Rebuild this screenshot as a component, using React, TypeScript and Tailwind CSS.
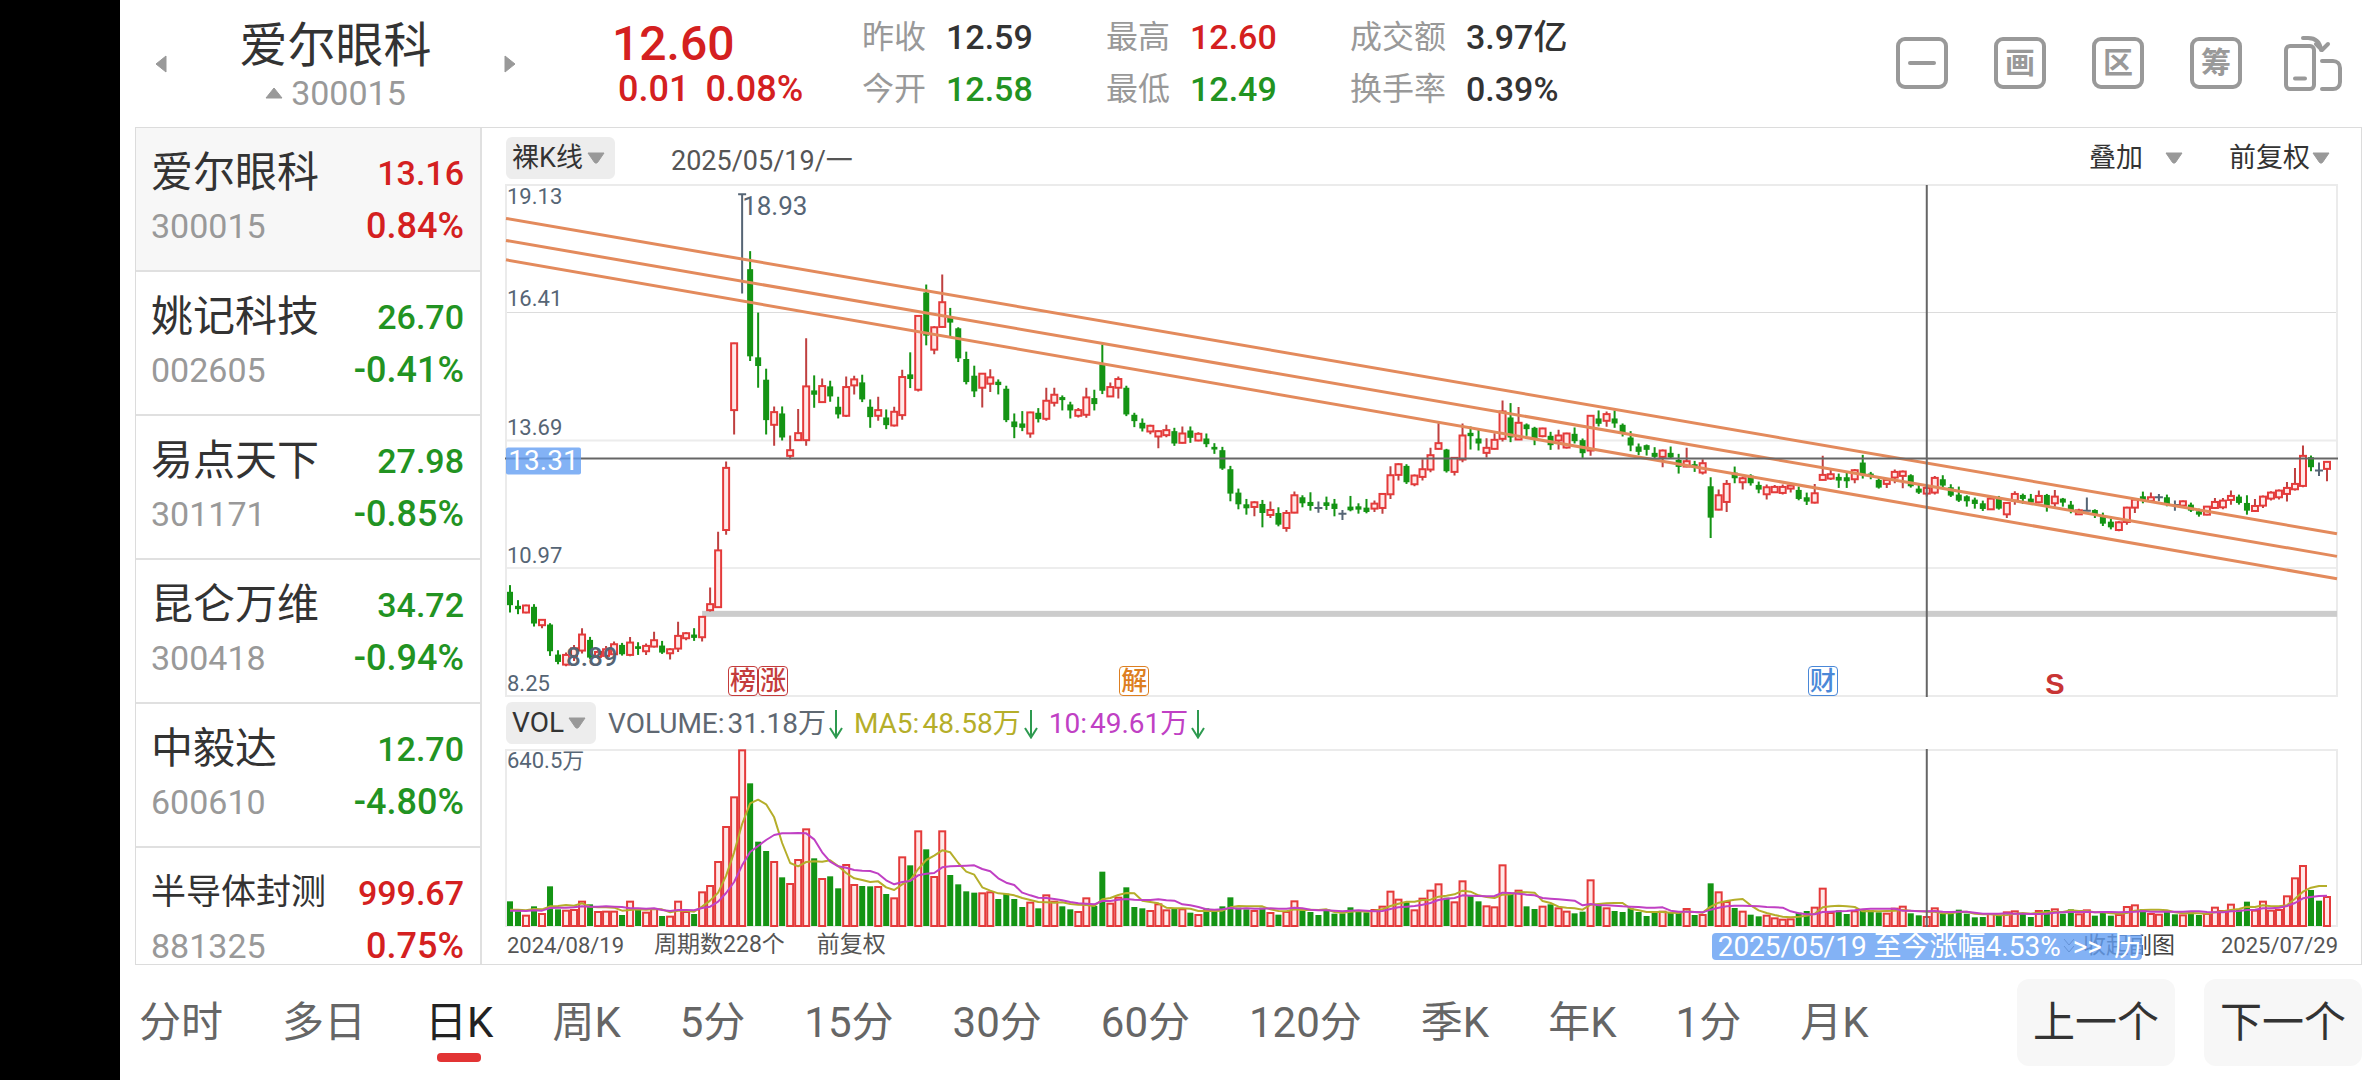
import React from "react";

/*
 * Daily bars: direction, then high, body top, body bottom and low.
 * Heights are in chart units, three to a pixel, growing downwards.
 */
const CANDLES = `
g 1213 1233 1273 1295|g 1258 1275 1285 1300|r 1272 1274 1295 1297|g 1270 1278 1328 1337|r 1315 1317 1333 1342|g 1327 1331 1411 1425
g 1408 1421 1443 1450|r 1415 1422 1451 1456|r 1392 1402 1425 1440|r 1342 1361 1409 1418|g 1368 1377 1430 1434|r 1405 1413 1428 1434
r 1395 1405 1425 1428|r 1382 1390 1420 1424|g 1386 1392 1420 1424|r 1368 1385 1422 1426|g 1384 1396 1404 1422|r 1388 1395 1411 1422
r 1353 1378 1397 1400|g 1380 1394 1415 1419|r 1402 1405 1417 1436|r 1323 1365 1403 1413|r 1354 1357 1372 1378|g 1342 1361 1371 1380
r 1306 1308 1369 1382|r 1220 1270 1288 1292|r 1053 1109 1279 1281|r 843 862 1048 1062|r 487 489 689 762|n 43 43 43 340
g 213 267 528 542|g 397 531 557 622|g 565 598 719 762|r 678 695 733 796|g 678 699 771 780|r 765 809 826 836
r 686 758 779 780|r 474 618 779 796|g 585 630 643 682|r 594 617 665 667|g 601 618 648 664|g 649 679 702 714
r 588 620 706 710|r 586 597 615 642|g 583 606 657 665|g 657 679 710 742|r 649 689 706 721|g 687 711 734 746
r 679 694 735 738|r 568 590 704 718|g 516 582 596 623|r 405 407 628 633|g 313 337 466 495|r 438 441 508 522
r 283 366 440 442|g 383 410 427 468|g 441 444 534 545|g 514 536 605 612|g 556 586 633 650|r 578 580 622 681
r 567 591 610 635|g 597 604 614 642|g 616 625 719 725|g 699 723 740 773|g 692 729 742 752|r 694 696 759 772
g 683 697 716 726|r 622 661 715 721|r 622 643 667 678|g 645 650 659 690|g 664 672 690 714|r 683 689 706 711
r 622 651 703 712|g 628 653 671 690|g 493 552 631 641|r 606 620 648 650|r 588 596 622 654|g 616 622 702 707
g 697 703 722 740|g 714 727 744 753|r 733 736 753 761|r 750 752 768 803|r 733 749 764 770|g 742 752 789 796
r 738 759 787 789|g 738 750 772 787|r 755 760 780 782|g 759 774 791 800|g 788 799 807 820|g 799 809 864 868
g 856 866 939 962|g 924 936 971 986|g 955 971 983 1002|r 962 965 979 1007|g 958 970 997 1040|r 963 988 1003 1012
g 980 997 1032 1037|r 988 997 1042 1053|r 933 944 996 998|g 944 950 968 980|g 935 964 976 990|n 963 982 982 996
g 948 965 976 988|g 955 969 985 1007|n 988 999 999 1018|g 946 978 989 992|g 968 977 987 999|g 955 981 994 998
r 960 969 984 994|r 937 940 982 999|r 857 884 941 955|r 848 851 883 900|g 851 856 905 910|r 882 885 911 917
r 836 866 889 900|r 802 824 867 875|r 728 788 805 807|g 805 807 872 876|r 830 832 874 885|r 729 765 837 845
g 738 757 767 807|g 744 774 789 810|r 773 802 817 831|r 758 778 805 807|r 660 693 775 783|g 668 711 771 785
r 680 727 777 778|g 729 732 746 766|g 739 742 778 794|r 742 744 767 770|g 754 766 794 808|r 748 765 780 807
r 757 759 801 804|g 741 760 782 789|g 774 779 818 832|r 704 706 810 826|g 690 714 730 738|r 693 701 721 739
g 690 714 729 742|g 729 733 759 768|g 752 771 795 812|g 789 798 814 824|g 792 794 808 825|g 800 817 829 833
r 807 810 829 860|g 798 817 831 834|g 820 838 859 879|r 802 842 858 860|g 841 851 862 874|r 836 848 876 882
g 890 917 1011 1072|r 927 944 987 989|r 898 910 964 994|g 858 876 893 908|r 888 893 905 927|g 881 885 908 915
g 903 913 927 938|r 912 920 941 957|r 913 919 935 937|r 912 919 937 942|r 912 915 924 936|g 918 928 955 959
g 936 950 963 973|r 910 938 966 969|r 826 883 898 899|r 868 881 894 898|g 879 889 900 922|g 876 890 902 922
r 865 869 896 908|g 823 846 882 894|g 874 879 885 896|g 892 898 921 924|r 893 898 910 922|r 867 874 891 908
r 870 873 886 923|g 881 884 917 921|g 912 924 936 940|r 912 922 939 948|r 886 892 936 942|g 884 896 915 920
g 911 920 945 949|g 918 942 960 964|g 944 947 962 978|g 951 957 970 984|g 960 968 985 991|r 950 954 986 988
g 946 954 984 987|r 964 967 1001 1012|r 932 940 960 972|g 939 943 955 970|g 940 954 966 970|r 930 946 965 968
g 940 943 975 993|r 928 948 968 978|g 952 954 966 978|g 961 972 990 998|r 984 989 1001 1003|n 951 990 990 990
g 986 988 1000 1012|g 996 1008 1029 1036|g 1014 1023 1040 1046|r 1022 1025 1048 1052|r 978 981 1024 1032|r 952 957 981 997
g 933 947 960 968|r 936 950 961 964|n 940 950 950 962|g 942 950 973 977|n 960 973 973 990|r 960 962 975 977
g 966 972 990 994|g 984 992 1002 1008|r 976 978 1002 1004|r 952 964 982 985|r 952 960 980 986|r 930 946 958 972
g 942 948 967 972|g 944 967 990 1002|r 955 976 991 994|r 945 948 975 982|r 932 936 954 960|r 927 930 950 957
r 904 922 940 963|r 862 910 926 930|r 795 826 916 920|g 825 830 860 872|n 846 870 870 886|r 842 844 865 902
`
  .trim()
  .split(/[|\n]/)
  .map((row) => {
    const [dir, ...nums] = row.trim().split(" ");
    const [high, top, bottom, low] = nums.map(Number);
    return { dir, high, top, bottom, low };
  });

/* Top edge of every volume bar; the base line is at VOLUME_BASE. */
const VOLUME_TOPS = [
  631, 661, 672, 646, 667, 586, 655, 657, 655, 630, 640, 661, 660, 660, 672, 630, 655, 663, 652, 675,
  675, 630, 661, 669, 602, 583, 511, 406, 317, 176, 277, 452, 480, 511, 559, 577, 505, 413, 502, 562,
  556, 592, 520, 580, 585, 586, 586, 609, 620, 497, 523, 419, 475, 556, 419, 552, 580, 601, 605, 605,
  602, 624, 608, 624, 648, 633, 652, 611, 630, 646, 655, 661, 620, 645, 542, 636, 618, 589, 648, 652,
  658, 638, 656, 654, 653, 665, 670, 652, 660, 646, 619, 650, 655, 658, 650, 664, 671, 661, 629, 658,
  663, 672, 655, 668, 667, 649, 660, 664, 655, 645, 600, 624, 634, 656, 621, 597, 578, 620, 632, 569,
  612, 631, 644, 647, 521, 608, 597, 646, 654, 645, 640, 650, 660, 667, 662, 566, 640, 650, 660, 663,
  652, 663, 675, 664, 660, 664, 665, 652, 672, 670, 577, 602, 631, 651, 660, 671, 676, 672, 680, 684,
  683, 665, 660, 648, 591, 664, 658, 669, 659, 655, 657, 664, 666, 651, 645, 667, 673, 676, 650, 668,
  667, 656, 668, 679, 678, 667, 673, 662, 659, 668, 678, 658, 657, 653, 668, 655, 668, 656, 674, 665,
  674, 670, 646, 641, 655, 667, 669, 660, 670, 671, 660, 672, 667, 648, 658, 639, 656, 632, 657, 630,
  657, 655, 614, 560, 523, 597, 629, 616,
];

const VOLUME_BASE = 705;
const RISING_FLAT_DAYS = [29, 197, 206];
const RED = "#e43a3a";
const GREEN = "#149414";
const SLATE = "#566575";
const VIEW_W = 5496;
const PRICE_TOP = 12;
const PRICE_H = 1536;

const barX = (i: number) => 12 + 24 * i;
const leftOf = (i: number) => `${((barX(i) + 3) / VIEW_W) * 100}%`;
const topOf = (y: number) => `${((y - PRICE_TOP) / PRICE_H) * 100}%`;

function average(days: number) {
  return VOLUME_TOPS.map((_, i) => {
    let sum = 0;
    for (let k = i - days + 1; k <= i; k++) sum += k < 0 ? 662 : VOLUME_TOPS[k];
    return `${barX(i)},${Math.round(sum / days)}`;
  }).join(" ");
}

function Candle({ i }: { i: number }) {
  const c = CANDLES[i];
  const x = barX(i);
  if (c.dir === "n") {
    return <path d={`M${x} ${c.high}V${c.low}M${x - 12} ${c.top}h24`} stroke={SLATE} strokeWidth="6" />;
  }
  if (c.dir === "g") {
    return (
      <g fill={GREEN}>
        <rect x={x - 3} y={c.high} width="6" height={c.low - c.high} />
        <rect x={x - 9} y={c.top} width="18" height={c.bottom - c.top} />
      </g>
    );
  }
  return (
    <g stroke={RED} strokeWidth="6">
      <path d={`M${x} ${c.high}V${c.top}M${x} ${c.bottom}V${c.low}`} stroke="#bf4040" />
      <rect x={x - 9} y={c.top} width="18" height={c.bottom - c.top} fill="#ffe8e8" />
    </g>
  );
}

function PriceSvg() {
  return (
    <svg className="block h-full w-full" viewBox="-3 12 5496 1536" preserveAspectRatio="none" aria-hidden="true">
      <path d="M0 397H5490M0 1162H5490" stroke="#dcdcdc" strokeWidth="3" />
      <path d="M0 780H5490" stroke="#ececec" strokeWidth="6" />
      <rect x="0" y="15" width="5490" height="1530" fill="none" stroke="#ebebeb" strokeWidth="6" />
      <rect x="588" y="1290" width="4902" height="18" fill="#cccccc" />
      {CANDLES.map((_, i) => (
        <Candle key={i} i={i} />
      ))}
      <g stroke="#e38a5c" strokeWidth="9">
        <path d="M0 115L5490 1059" />
        <path d="M0 181L5490 1127" />
        <path d="M0 239L5490 1194" />
      </g>
      <path d="M-3 834H5493M4260 15V1548" stroke="#666" strokeWidth="6" />
    </svg>
  );
}

function VolumeSvg() {
  return (
    <svg className="block h-full w-full" viewBox="-3 174 5496 534" preserveAspectRatio="none" aria-hidden="true">
      <rect x="0" y="177" width="5490" height="528" fill="none" stroke="#ebebeb" strokeWidth="6" />
      {VOLUME_TOPS.map((top, i) => {
        const dir = CANDLES[i].dir;
        const rising = dir === "r" || RISING_FLAT_DAYS.includes(i);
        const x = barX(i);
        return rising ? (
          <rect key={i} x={x - 9} y={top + 2} width="18" height={VOLUME_BASE - top - 2} fill="#ffe8e8" stroke={RED} strokeWidth="6" />
        ) : (
          <rect key={i} x={x - 9} y={top} width="18" height={VOLUME_BASE - top} fill={GREEN} />
        );
      })}
      <g fill="none" strokeWidth="6" strokeLinejoin="round">
        <polyline points={average(5)} stroke="#b5ae2a" />
        <polyline points={average(10)} stroke="#c040c4" />
      </g>
      <path d="M4260 174V708" stroke="#666" strokeWidth="6" />
    </svg>
  );
}

const STOCKS = [
  { name: "爱尔眼科", code: "300015", price: "13.16", change: "0.84%", up: true },
  { name: "姚记科技", code: "002605", price: "26.70", change: "-0.41%", up: false },
  { name: "易点天下", code: "301171", price: "27.98", change: "-0.85%", up: false },
  { name: "昆仑万维", code: "300418", price: "34.72", change: "-0.94%", up: false },
  { name: "中毅达", code: "600610", price: "12.70", change: "-4.80%", up: false },
  { name: "半导体封测", code: "881325", price: "999.67", change: "0.75%", up: true },
];

const STATS = [
  ["昨收", "12.59", "text-[#333]", "今开", "12.58", "text-[#229322]"],
  ["最高", "12.60", "text-[#d42020]", "最低", "12.49", "text-[#229322]"],
  ["成交额", "3.97亿", "text-[#333]", "换手率", "0.39%", "text-[#333]"],
];

const PERIODS = ["分时", "多日", "日K", "周K", "5分", "15分", "30分", "60分", "120分", "季K", "年K", "1分", "月K"];

function Caret() {
  return (
    <svg className="h-3 w-[18px] shrink-0" viewBox="0 0 18 12" aria-hidden="true">
      <path d="M1 1h16L10.500 10.500q-1.500 1.300-3 0z" fill="#999" stroke="#999" strokeLinejoin="round" />
    </svg>
  );
}

function DownArrow() {
  return (
    <svg className="h-[30px] w-[14px] shrink-0" viewBox="0 0 14 30" fill="none" stroke="#2e9a50" strokeWidth="2" aria-hidden="true">
      <path d="M7 1V28M1 19L7 28.500L13 19" />
    </svg>
  );
}

function Header() {
  return (
    <header className="flex h-[127px] shrink-0 items-start pr-5">
      <div className="flex h-full w-[381px] shrink-0 items-center justify-between pl-5">
        <button aria-label="上一只股票" className="h-[18px] w-3">
          <svg viewBox="0 0 12 18" className="block h-full w-full" aria-hidden="true">
            <path d="M11 1v16L1 9z" fill="#999" stroke="#999" strokeLinejoin="round" />
          </svg>
        </button>
        <div className="flex h-full flex-col items-center pt-[18px]">
          <h1 className="text-[48px] leading-[56px] text-[#333]">爱尔眼科</h1>
          <div className="flex items-center gap-2 text-[34px] leading-[38px] text-[#999]">
            <svg viewBox="0 0 18 12" className="h-3 w-[18px]" aria-hidden="true">
              <path d="M1 11h16L9 1z" fill="#999" stroke="#999" strokeLinejoin="round" />
            </svg>
            300015
          </div>
        </div>
        <button aria-label="下一只股票" className="h-[18px] w-3">
          <svg viewBox="0 0 12 18" className="block h-full w-full" aria-hidden="true">
            <path d="M1 1v16L11 9z" fill="#999" stroke="#999" strokeLinejoin="round" />
          </svg>
        </button>
      </div>
      <div className="ml-24 w-[250px] shrink-0 pt-[18px] font-medium text-[#d42020]">
        <div className="text-[48px] leading-[52px]">12.60</div>
        <div className="flex gap-4 pl-1.5 text-[36px] leading-[38px]">
          <span>0.01</span>
          <span>0.08%</span>
        </div>
      </div>
      <dl className="flex pt-[11px]">
        {STATS.map(([l1, v1, c1, l2, v2, c2]) => (
          <div key={l1} className="grid w-[244px] grid-cols-[auto_1fr] gap-x-5 leading-[52px]">
            <dt className="text-[32px] text-[#999]">{l1}</dt>
            <dd className={`text-[34px] font-medium whitespace-nowrap ${c1}`}>{v1}</dd>
            <dt className="text-[32px] text-[#999]">{l2}</dt>
            <dd className={`text-[34px] font-medium whitespace-nowrap ${c2}`}>{v2}</dd>
          </div>
        ))}
      </dl>
      <div className="ml-auto flex items-center gap-[46px] pt-[35px]">
        <button aria-label="缩小" className="flex size-[52px] items-center justify-center rounded-[9px] border-4 border-[#999]">
          <span className="h-1 w-7 rounded-full bg-[#999]" />
        </button>
        {["画", "区", "筹"].map((t) => (
          <button key={t} className="flex size-[52px] items-center justify-center rounded-[9px] border-4 border-[#999] text-[30px] leading-none font-bold text-[#999]">
            {t}
          </button>
        ))}
        <button aria-label="旋转屏幕" className="-ml-1 h-14 w-[58px]">
          <svg viewBox="0 0 58 56" className="block h-full w-full" fill="none" stroke="#999" strokeWidth="4" strokeLinecap="round" strokeLinejoin="round" aria-hidden="true">
            <rect x="2" y="11" width="28" height="43" rx="4" />
            <path d="M11 43.500h10M19 3h5c8 0 12 4 13 12M32 9l6 6 6-6M38 26h11c4 0 7 3 7 7v14c0 4-3 7-7 7H38" />
          </svg>
        </button>
      </div>
    </header>
  );
}

function Watchlist() {
  return (
    <ul className="w-[346px] shrink-0 overflow-hidden border-r-2 border-[#e0e0e0]">
      {STOCKS.map((s, i) => (
        <li key={s.code}>
          <button
            className={`grid h-36 w-full grid-cols-[1fr_auto] content-start items-center gap-y-[3px] border-b-2 border-[#e0e0e0] pt-5 pr-4 pl-[15px] text-[34px] leading-[50px] ${i === 0 ? "bg-[#f7f7f7]" : "bg-white"}`}
          >
            <span className={`text-left text-[#333] ${s.name.length > 4 ? "text-[35px]" : "text-[42px]"}`}>{s.name}</span>
            <span className={`text-right font-medium ${s.up ? "text-[#d42020]" : "text-[#229322]"}`}>{s.price}</span>
            <span className="text-left text-[#999]">{s.code}</span>
            <span className={`text-right text-[36px] font-medium ${s.up ? "text-[#d42020]" : "text-[#229322]"}`}>{s.change}</span>
          </button>
        </li>
      ))}
    </ul>
  );
}

function EventTag({ day, className, children }: { day: number; className: string; children: React.ReactNode }) {
  return (
    <div className="absolute bottom-px flex -translate-x-1/2" style={{ left: leftOf(day) }}>
      {React.Children.map(children, (t) => (
        <span className={`flex size-[30px] items-center justify-center text-[26px] leading-none font-medium ${className}`}>{t}</span>
      ))}
    </div>
  );
}

function PriceChart() {
  return (
    <div className="relative min-h-0 flex-1">
      <div className="absolute inset-0">
        <PriceSvg />
      </div>
      <div className="absolute inset-0 grid grid-rows-4 pl-0.5 text-[22px] leading-[26px] text-[#566575]">
        {["16.41", "13.69", "10.97", "8.25"].map((v, i) => (
          <div key={v} className="flex flex-col justify-end">
            {i === 0 && <span className="mb-auto">19.13</span>}
            <span>{v}</span>
          </div>
        ))}
      </div>
      <span className="absolute -translate-y-1/2 text-[26px] leading-none text-[#566575]" style={{ left: leftOf(29), top: topOf(78) }}>
        18.93
      </span>
      <span className="absolute -translate-y-1/2 text-[26px] leading-none font-medium text-[#566575]" style={{ left: leftOf(7), top: topOf(1427) }}>
        8.89
      </span>
      <span
        className="absolute left-px flex h-[27px] w-[75px] -translate-y-1/2 items-center justify-center rounded-xs bg-[#649ff3]/80 text-[28px] leading-none text-white"
        style={{ top: topOf(840) }}
      >
        13.31
      </span>
      <EventTag day={31} className="rounded border border-[#c43c3c] text-[#c43c3c]">
        <>榜</>
        <>涨</>
      </EventTag>
      <EventTag day={78} className="rounded border border-[#dd7f22] text-[#dd7f22]">
        <>解</>
      </EventTag>
      <EventTag day={164} className="rounded border border-[#4a88d8] text-[#4a88d8]">
        <>财</>
      </EventTag>
      <div
        className="absolute -bottom-0.5 -translate-x-1/2 font-['Liberation_Sans',sans-serif] text-[29px] leading-[30px] font-bold text-[#c83434]"
        style={{ left: leftOf(193) }}
      >
        S
      </div>
    </div>
  );
}

function ChartPanel() {
  return (
    <section className="flex min-w-0 flex-1 flex-col pr-[23px] pl-[23px]">
      <div className="flex h-14 shrink-0 items-center pt-1 text-[27px] text-[#333]">
        <button className="ml-px flex h-[42px] items-center gap-1 rounded-md bg-[#ededed] pr-2.5 pl-1.5">
          裸K线
          <Caret />
        </button>
        <span className="ml-14 pt-1.5 text-[#555]">2025/05/19/一</span>
        <button className="ml-auto flex items-center gap-[22px]">
          叠加
          <Caret />
        </button>
        <button className="mr-2 ml-[46px] flex items-center gap-0.5">
          前复权
          <Caret />
        </button>
      </div>
      <PriceChart />
      <div className="flex h-[52px] shrink-0 items-center text-[28px]">
        <button className="ml-px flex h-[42px] items-center gap-1 rounded-md bg-[#ededed] pr-2.5 pl-1.5 text-[#333]">
          VOL
          <Caret />
        </button>
        <div className="ml-3 flex items-center gap-[11px] pt-0.5">
          <span className="flex items-center gap-[3px] text-[#5f6872]">
            <span>VOLUME:</span>
            <span>31.18万</span>
            <DownArrow />
          </span>
          <span className="flex items-center gap-[3px] text-[#b5ae2a]">
            <span>MA5:</span>
            <span>48.58万</span>
            <DownArrow />
          </span>
          <span className="flex items-center gap-[3px] text-[#c040c4]">
            <span>10:</span>
            <span>49.61万</span>
            <DownArrow />
          </span>
        </div>
      </div>
      <div className="relative h-[178px] shrink-0">
        <VolumeSvg />
        <span className="absolute top-0 left-0.5 text-[22px] leading-[24px] text-[#566575]">640.5万</span>
      </div>
      <div className="relative flex h-[37px] shrink-0 items-center pl-0.5 text-[22px] text-[#555]">
        <span>2024/08/19</span>
        <span className="ml-[30px] text-[23px]">周期数228个</span>
        <span className="ml-8 text-[23px]">前复权</span>
        <button className="ml-auto flex items-center gap-2 text-[23px] leading-none text-[#444]">
          <svg viewBox="0 0 12 16" className="h-4 w-3" fill="none" stroke="#666" strokeWidth="1" aria-hidden="true">
            <path d="M1 1l5 6 5-6M1 8l5 6 5-6" />
          </svg>
          收起副图
        </button>
        <span className="ml-[46px]">2025/07/29</span>
        <a
          href="#history"
          className="absolute top-1.5 right-[196px] flex h-[27px] items-center gap-3 rounded-sm bg-[#649ff3]/80 pl-1.5 text-[28px] leading-none whitespace-nowrap text-white"
        >
          <span>2025/05/19 至今涨幅4.53%</span>
          <span>&gt;&gt;</span>
          <span>历</span>
        </a>
      </div>
    </section>
  );
}

function Footer() {
  return (
    <footer className="flex h-[115px] shrink-0 items-center">
      <nav className="flex gap-[59px] pl-1 text-[42px] leading-[60px] text-[#666]">
        {PERIODS.map((p) => (
          <button key={p} className={`relative whitespace-nowrap ${p === "日K" ? "text-[#222]" : ""}`}>
            {p}
            {p === "日K" && <span className="absolute -bottom-[9px] left-1/2 h-[9px] w-11 -translate-x-1/2 rounded bg-[#e23434]" />}
          </button>
        ))}
      </nav>
      <div className="ml-auto flex gap-[29px] text-[42px] text-[#333]">
        <button className="h-[87px] w-[158px] rounded-xl bg-[#f7f7f7]">上一个</button>
        <button className="h-[87px] w-[158px] rounded-xl bg-[#f7f7f7]">下一个</button>
      </div>
    </footer>
  );
}

export default function App() {
  return (
    <div className="flex h-screen bg-white font-[Roboto,'Noto_Sans_CJK_SC',sans-serif]">
      <div className="w-[120px] shrink-0 bg-black" />
      <div className="flex min-w-0 flex-1 flex-col pr-[14px] pl-[15px]">
        <Header />
        <main className="flex min-h-0 flex-1 border border-[#dcdcdc]">
          <Watchlist />
          <ChartPanel />
        </main>
        <Footer />
      </div>
    </div>
  );
}
